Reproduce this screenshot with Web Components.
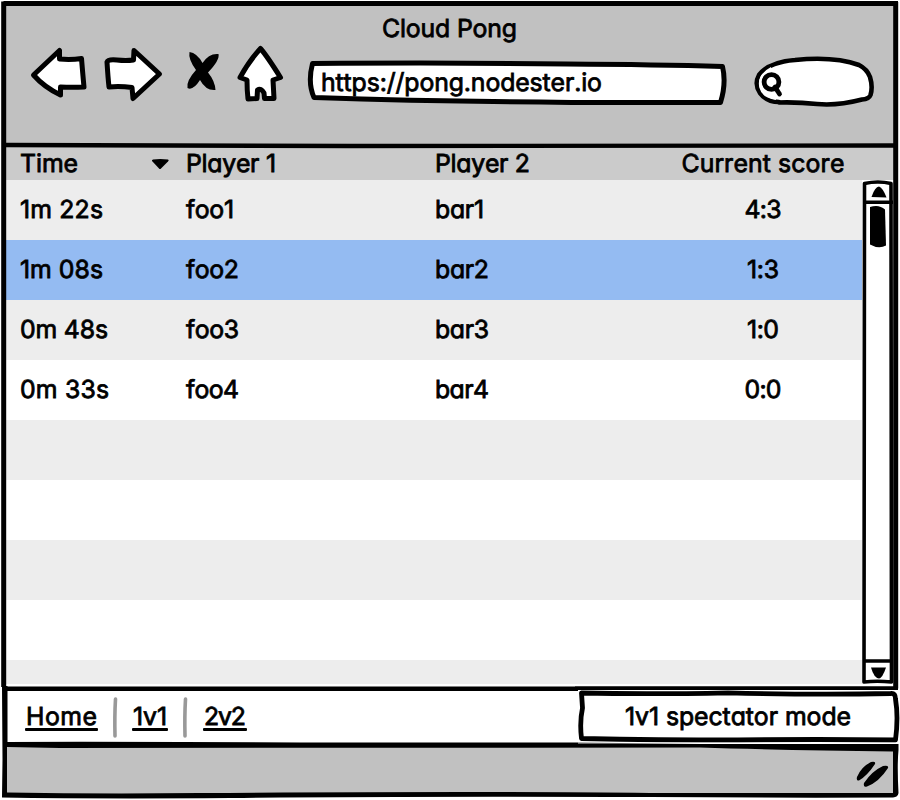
<!DOCTYPE html>
<html lang="en">
<head>
<meta charset="utf-8">
<title>Cloud Pong</title>
<style>
html,body{margin:0;background:#fff}
body{width:900px;height:800px;overflow:hidden;font-family:Inter,"Noto Sans",sans-serif;font-size:24.8px;color:#000}
</style>
</head>
<body>
<pong-window></pong-window>
<script>
function define(name, html, ready) {
  customElements.define(name, class extends HTMLElement {
    constructor() {
      super();
      this.attachShadow({mode: 'open'}).innerHTML = html;
    }
    connectedCallback() { if (ready) ready(this, this.shadowRoot); }
  });
}

// One line of text, tracked so that it fills the requested width.
define('sk-label', `<style>
:host{display:inline-block;white-space:pre;line-height:30px;flex:none}
span{display:inline-block;font-feature-settings:"cv11";font-kerning:none;text-rendering:geometricPrecision;-webkit-text-stroke:.8px #000;paint-order:stroke;stroke-linejoin:round}
</style><span></span>`, (host, root) => {
  const span = root.querySelector('span');
  span.textContent = host.getAttribute('text');
  const w = +host.getAttribute('w');
  if (w) {
    const gap = (w - span.getBoundingClientRect().width) / (span.textContent.length - 1);
    span.style.letterSpacing = gap + 'px';
    span.style.marginRight = -gap + 'px';
  }
});

// Hand-drawn toolbar symbols.
const icons = {
  back: [62, 56, '<path d="M3.500 27 29.500 2.500V11Q41 12 51.500 10.500 52.500 23 54 39 42 39.500 30.500 39V47Q14 39 3.500 27Z"/>'],
  forward: [62, 58, '<path d="M4 14Q5 11 14 12 23 13 30.500 12L31 2.500 56.500 26 30 50.500 29 39.500Q17 38 6 39 5 30 4 14Z"/>'],
  stop: [34, 42, '<path fill="#000" stroke="none" d="M2.500 1Q10 2 15.500 12 22 2 31.500 3 33 9 21 21.500 28 30 28.500 39 19 40 13 29 6 40 .500 37-1 30 9 19 1 8 2.500 1Z"/>'],
  home: [48, 56, '<path d="M23.500 1.500Q30 9 43.500 30.500L36 33 37 51.500H27.500L27 46Q24 40.500 20.500 43L20 51.500 11 52Q10 43 10 33L3 30.500Q12 14 23.500 1.500Z"/>']
};
define('sk-icon', `<style>:host{display:block}svg{display:block;overflow:visible;fill:#fff;stroke:#000;stroke-width:5;stroke-linejoin:round;stroke-linecap:round}</style><div></div>`, (host, root) => {
  const [w, h, body] = icons[host.getAttribute('name')];
  root.querySelector('div').innerHTML = `<svg width="${w}" height="${h}" viewBox="0 0 ${w} ${h}">${body}</svg>`;
});

define('sk-address', `<style>
:host{display:grid;width:420px;height:46px}
svg,sk-label{grid-area:1/1}
sk-label{margin:7px 0 0 14px}
</style>
<svg width="420" height="46"><path d="M5.500 3.500Q145 2.500 260 4 350 4.500 415.500 6.500 419.500 23 413.500 42.500H265Q130 41.500 7 37.500 .500 23 5.500 3.500Z" fill="#fff" stroke="#000" stroke-width="5" stroke-linejoin="round"/></svg>
<sk-label text="https://pong.nodester.io" w="281"></sk-label>`);

define('sk-search', `<style>:host{display:block}svg{display:block;overflow:visible;fill:#fff;stroke:#000;stroke-linecap:round}</style>
<svg width="122" height="52"><path stroke-width="4.600" d="M26 46Q14 46 7 37 1 28 6 19 16 6 42 4 81 0 106 9 114 13 117 21 120 31 117.500 39 116 43 109 43.500 84 50 64 48 46 46 26 46.500"/><path stroke="none" d="M23 44Q9 42 6.500 32 3 19 18 11Z"/><circle cx="18.500" cy="26" r="7.400" stroke-width="4.800"/><path stroke-width="4.800" d="m22 31 4.500 7"/></svg>`);

define('pong-toolbar', `<style>
:host{display:grid;grid-template-rows:43px 1fr;background:#c1c1c1}
header{display:flex;justify-content:center;padding-top:9px;padding-right:3px}
.bar{display:flex;align-items:flex-start}
.back{margin:1px 11px 0 24px}.forward{margin:1px 22px 0 0}.stop{margin:4px 16px 0 0}.home{margin-right:22px}
sk-address{margin:13px 26px 0 0}sk-search{margin-top:9px}
</style>
<header><sk-label text="Cloud Pong" w="135"></sk-label></header>
<div class="bar">
<sk-icon class="back" name="back"></sk-icon><sk-icon class="forward" name="forward"></sk-icon><sk-icon class="stop" name="stop"></sk-icon><sk-icon class="home" name="home"></sk-icon>
<sk-address></sk-address><sk-search></sk-search>
</div>`);

define('sk-row', `<style>
:host{display:grid;grid-template-columns:166px 249px 229px 198px;align-items:center;height:60px;padding:0 0 2px 14px;box-sizing:border-box}
::slotted(.center){justify-self:center}
</style><slot></slot>`);

define('sk-scrollbar', `<style>:host{display:block}svg{display:block;overflow:visible;stroke-linejoin:round}</style>
<svg width="32" height="504">
<path d="M2.500 3.500Q16 .500 29 3.500L29.500 502Q15 500.500 2 502Z" fill="#fff" stroke="#000" stroke-width="3.600"/>
<path d="M2 22.300H31M2 481H30" stroke="#000" stroke-width="3.400"/>
<path d="M9.500 17Q13 6.500 17 6.500 21 8 24.500 17.500Z"/>
<path d="M8 27Q17 24 23 29.500L24 65.500Q17 69.500 8 64.500Z"/>
<path d="M9 487.500H24Q20.500 498 17 498.500 12 498 9 487.500Z"/>
</svg>`);

define('pong-table', `<style>
:host{display:grid;grid-template-rows:34px 506px;background:#fff}
.head{height:34px;background:#cbcbcb;padding:0 0 1px 14px}
.time{display:flex;align-items:center}
.time svg{margin:3px 0 0 73px}
.body{display:flex}
.rows{width:856px;height:504px;overflow:hidden}
.rows sk-row:nth-child(odd){background:#ededed}
.rows sk-row.selected{background:#94bbf2}
</style>
<sk-row class="head"><span class="time"><sk-label text="Time" w="58"></sk-label><svg width="19" height="12"><path d="M2 1.500Q9 .500 17 1.500 18.500 2 17 3.500L10 10.500Q9 11.500 8 10.500L1 3Q.500 2 2 1.500Z"/></svg></span><sk-label text="Player 1" w="90"></sk-label><sk-label text="Player 2" w="95"></sk-label><sk-label class="center" text="Current score" w="163"></sk-label></sk-row>
<div class="body"><div class="rows"></div><sk-scrollbar></sk-scrollbar></div>`, (host, root) => {
  const games = [
    [['1m 22s', 83], ['foo1', 48], ['bar1', 49], ['4:3', 37]],
    [['1m 08s', 83], ['foo2', 53], ['bar2', 54], ['1:3', 32]],
    [['0m 48s', 88], ['foo3', 53], ['bar3', 54], ['1:0', 32]],
    [['0m 33s', 89], ['foo4', 53], ['bar4', 54], ['0:0', 37]],
    [], [], [], [], []
  ];
  root.querySelector('.rows').innerHTML = games.map((g, i) =>
    `<sk-row${i === 1 ? ' class="selected"' : ''}>` + g.map(([t, w], c) =>
      `<sk-label text="${t}" w="${w}"${c === 3 ? ' class="center"' : ''}></sk-label>`).join('') + '</sk-row>').join('');
});

define('sk-link', `<style>
:host{display:block}
a{display:block;height:31px;color:inherit;text-decoration:none}
i{display:block;height:2.500px;margin:-3px -1px 0;background:#000;border-radius:1px}
</style><a><sk-label></sk-label><i></i></a>`, (host, root) => {
  const old = root.querySelector('sk-label'), label = document.createElement('sk-label');
  label.setAttribute('text', host.getAttribute('text'));
  label.setAttribute('w', host.getAttribute('w'));
  old.replaceWith(label);
});

define('sk-button', `<style>
:host{display:grid;width:322px;height:53px;background:#fff}
svg,sk-label{grid-area:1/1}svg{overflow:visible}
sk-label{justify-self:center;margin:11px 2px 0 0}
</style>
<svg width="322" height="53"><path d="M3.500 3Q70 4.500 150 2.800 235 5 313 3.500 317.500 3 317.500 9 320.500 27 317.500 50 240 49 160 50 80 50 3.500 48.500 1.500 32 4.500 18Z" fill="#fff" stroke="#000" stroke-width="4.800" stroke-linejoin="round"/></svg>
<sk-label text="1v1 spectator mode" w="226"></sk-label>`);

define('pong-nav', `<style>
:host{display:flex;align-items:flex-start;background:#fff;padding-left:18px}
sk-link{margin-top:10px}
svg{margin:5px 0 0;flex:none;display:block}
sk-button{margin:-1px 0 0 auto;flex:none}
</style>
<sk-link text="Home" w="71"></sk-link>
<svg width="36" height="44"><path d="M18.500 3Q17.500 20 18 40" fill="none" stroke="#999" stroke-width="3.600" stroke-linecap="round"/></svg>
<sk-link text="1v1" w="34"></sk-link>
<svg width="37" height="44"><path d="M18.500 3Q17.500 20 18 40" fill="none" stroke="#999" stroke-width="3.600" stroke-linecap="round"/></svg>
<sk-link text="2v2" w="42"></sk-link>
<sk-button></sk-button>`);

define('pong-footer', `<style>:host{display:flex;justify-content:flex-end;align-items:flex-start;background:#c1c1c1}svg{margin:14px 7px 0 0}</style>
<svg width="33" height="30"><path d="M15 2Q20 1 19 4 11 16 3 20.500 0 21 1 17 5 7 15 2ZM27 6Q33 5 32 8 23 22 11 26.500 7 28 8 23 16 11 27 6Z"/></svg>`);

// The frame runs on top of the stacked sections and separates them with ink lines.
define('pong-window', `<style>
:host{display:grid;position:relative;width:900px;height:800px;box-sizing:border-box;padding:4px 4px 5px 6px;grid-template-rows:142px 540px 60px 49px}
pong-nav{position:relative;z-index:2;margin:5px -4px 0 2px}
.frame{position:absolute;inset:0;z-index:1;pointer-events:none}
.rules{z-index:3}
</style>
<pong-toolbar></pong-toolbar><pong-table></pong-table><pong-nav></pong-nav><pong-footer></pong-footer>
<svg class="frame" width="900" height="800" fill="none" stroke="#000" stroke-width="5" stroke-linejoin="round">
<path d="M894 690H900V752H898V800H894Z" fill="#fff" stroke="none"/>
<path d="M895.700 2V688.500M3.500 3.500H898M3.700 1.500Q3.400 350 3.700 687"/>
<path d="M6 145Q200 145 350 146T896 145.500" stroke-width="4.400"/>
<path d="M4 688.700H580M575 688.500H898" stroke-width="4.600"/>
</svg>
<svg class="frame rules" width="900" height="800" fill="#000">
<path d="M2 686H7.500L7.500 742Q100 741.500 300 742.500L580 742.500 700 744H898.500V750Q897 765 898.500 793Q898 797 893 797.500 780 798 650 797 400 796 230 798 100 799 2 797.500L2.500 760ZM7 747V792.500Q100 794 200 793 500 791 650 793L893 793V751.500Q780 750 700 747.500L60 748Z" fill-rule="evenodd"/>
<path d="M578 743H900" stroke="#fff" stroke-width=".8"/>
</svg>`);
</script>
</body>
</html>
